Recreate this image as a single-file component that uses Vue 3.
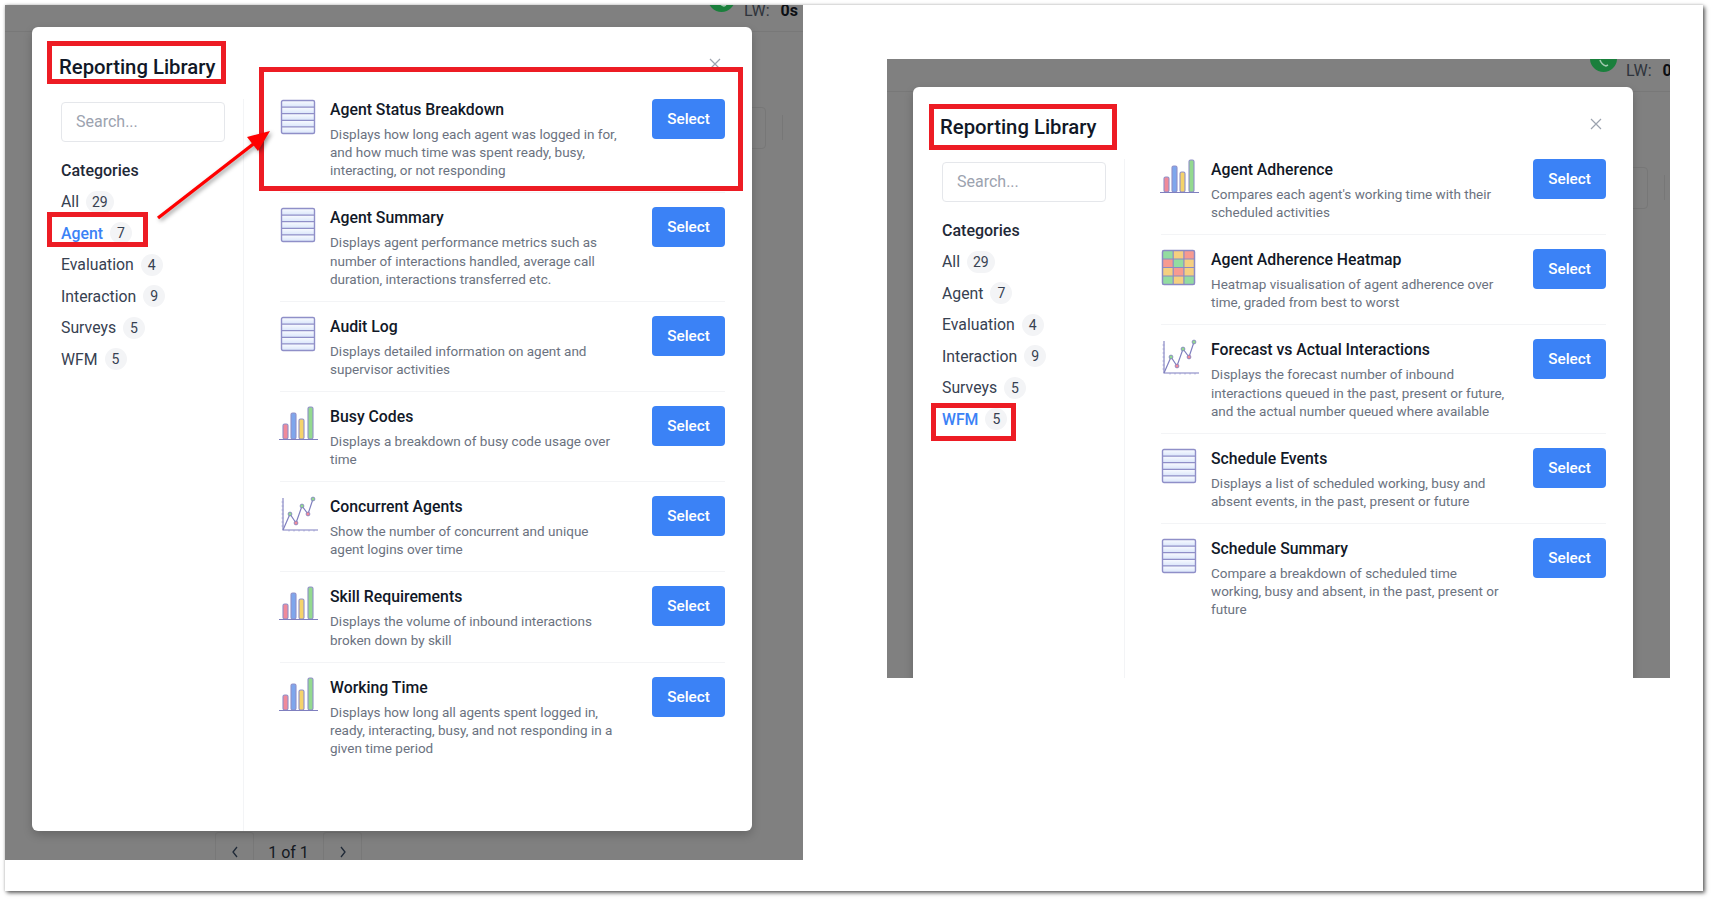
<script setup>
const categories = [
  { name: "All", count: 29 },
  { name: "Agent", count: 7 },
  { name: "Evaluation", count: 4 },
  { name: "Interaction", count: 9 },
  { name: "Surveys", count: 5 },
  { name: "WFM", count: 5 },
];

const agentReports = [
  { icon: "lines", title: "Agent Status Breakdown", text: "Displays how long each agent was logged in for, and how much time was spent ready, busy, interacting, or not responding" },
  { icon: "lines", title: "Agent Summary", text: "Displays agent performance metrics such as number of interactions handled, average call duration, interactions transferred etc." },
  { icon: "lines", title: "Audit Log", text: "Displays detailed information on agent and supervisor activities" },
  { icon: "bars", title: "Busy Codes", text: "Displays a breakdown of busy code usage over time" },
  { icon: "trend", title: "Concurrent Agents", text: "Show the number of concurrent and unique agent logins over time" },
  { icon: "bars", title: "Skill Requirements", text: "Displays the volume of inbound interactions broken down by skill" },
  { icon: "bars", title: "Working Time", text: "Displays how long all agents spent logged in, ready, interacting, busy, and not responding in a given time period" },
];

const wfmReports = [
  { icon: "bars", title: "Agent Adherence", text: "Compares each agent's working time with their scheduled activities" },
  { icon: "heat", title: "Agent Adherence Heatmap", text: "Heatmap visualisation of agent adherence over time, graded from best to worst" },
  { icon: "trend", title: "Forecast vs Actual Interactions", text: "Displays the forecast number of inbound interactions queued in the past, present or future, and the actual number queued where available" },
  { icon: "lines", title: "Schedule Events", text: "Displays a list of scheduled working, busy and absent events, in the past, present or future" },
  { icon: "lines", title: "Schedule Summary", text: "Compare a breakdown of scheduled time working, busy and absent, in the past, present or future" },
];

const panels = [
  { id: "agent", active: "Agent", reports: agentReports, clock: "0s" },
  { id: "wfm", active: "WFM", reports: wfmReports, clock: "0s" },
];

const heatCells = [
  ["#93dca0", "#f5cf80", "#f79a90"],
  ["#f79a90", "#93dca0", "#f5cf80"],
  ["#f5cf80", "#f79a90", "#f5cf80"],
  ["#93dca0", "#f5cf80", "#93dca0"],
];
const barList = [
  { x: 3, y: 18, h: 15, fill: "#f08a9a" },
  { x: 11, y: 7, h: 26, fill: "#7ea6ec" },
  { x: 19, y: 13, h: 20, fill: "#f5d36a" },
  { x: 28, y: 1, h: 32, fill: "#93d98f" },
];
const trendDots = [
  { x: 10, y: 18, fill: "#93d98f" },
  { x: 16, y: 27, fill: "#f08a9a" },
  { x: 22, y: 10, fill: "#93d98f" },
  { x: 28, y: 18, fill: "#f08a9a" },
  { x: 33, y: 3, fill: "#93d98f" },
];
</script>

<template>
  <div class="page">
    <div class="sheet">
      <section v-for="panel in panels" :key="panel.id" class="panel" :class="'panel-' + panel.id">
        <!-- dimmed app behind the dialog -->
        <div class="backdrop">
          <div class="topbar"></div>
          <div class="call-dot">
            <svg width="14" height="14" viewBox="0 0 14 14" class="phone">
              <path d="M3 6c1 3 3 5 6 6l2-1" fill="none" stroke="#9fc9ad" stroke-width="1.6" />
            </svg>
          </div>
          <div class="lw">LW: <b>{{ panel.clock }}</b></div>
          <div class="ghost-box"></div>
          <div class="ghost-line"></div>
          <div class="pager">
            <span class="pager-btn">
              <svg width="8" height="12" viewBox="0 0 8 12"><path d="M6 1 2 6l4 5" fill="none" stroke="#1f2937" stroke-width="1.3" /></svg>
            </span>
            <span class="pager-text">1 of 1</span>
            <span class="pager-btn">
              <svg width="8" height="12" viewBox="0 0 8 12"><path d="M2 1l4 5-4 5" fill="none" stroke="#1f2937" stroke-width="1.3" /></svg>
            </span>
          </div>
        </div>

        <div class="modal">
          <header class="modal-head">
            <h2 class="modal-title">Reporting Library</h2>
            <button class="close" aria-label="Close">
              <svg width="12" height="12" viewBox="0 0 12 12"><path d="M1 1l10 10M11 1 1 11" stroke="#9ca3af" stroke-width="1.2" /></svg>
            </button>
          </header>

          <div class="modal-body">
            <aside class="sidebar">
              <input class="search" type="text" placeholder="Search..." />
              <div class="cat-title">Categories</div>
              <ul class="cats">
                <li v-for="cat in categories" :key="cat.name" class="cat" :class="{ active: cat.name === panel.active }">
                  <span>{{ cat.name }}</span>
                  <span class="badge">{{ cat.count }}</span>
                </li>
              </ul>
            </aside>

            <div class="reports">
              <article v-for="report in panel.reports" :key="report.title" class="report">
                <svg class="icon" width="36" height="36" viewBox="0 0 36 36">
                  <template v-if="report.icon === 'lines'">
                    <defs>
                      <linearGradient :id="'stripe-' + panel.id" x1="0" y1="0" x2="0" y2="1">
                        <stop offset="0" stop-color="#fafcff" />
                        <stop offset="1" stop-color="#d9e5fa" />
                      </linearGradient>
                    </defs>
                    <rect v-for="n in 5" :key="n" x="1.5" :y="1.5 + (n - 1) * 6.6" width="33" height="6.6" :fill="'url(#stripe-' + panel.id + ')'" />
                    <rect x="1.5" y="1.5" width="33" height="33" rx="1.5" fill="none" stroke="#8f8fc8" stroke-width="1.4" />
                    <path d="M1.5 8.1h33M1.5 14.7h33M1.5 21.3h33M1.5 27.9h33" stroke="#8f8fc8" stroke-width="1.3" />
                  </template>

                  <template v-else-if="report.icon === 'bars'">
                    <rect v-for="bar in barList" :key="bar.x" :x="bar.x" :y="bar.y" width="5" :height="bar.h" rx="1.6" :fill="bar.fill" stroke="#8f8fc8" stroke-width="1.1" />
                    <path d="M-1 33.5h39" stroke="#7f7fbf" stroke-width="1.2" />
                  </template>

                  <template v-else-if="report.icon === 'trend'">
                    <path d="M3 2v32h35" fill="none" stroke="#7f7fbf" stroke-width="1.1" />
                    <path d="M1.5 6h2M1.5 10h2M1.5 14h2M1.5 18h2M1.5 22h2M1.5 26h2M1.5 30h2M9 34v1.5M14 34v1.5M19 34v1.5M24 34v1.5M29 34v1.5M34 34v1.5" stroke="#9a9ad0" stroke-width="0.8" />
                    <path d="M3 34 10 18l6 9 6-17 6 8 5-15" fill="none" stroke="#7f7fbf" stroke-width="1.2" />
                    <circle v-for="dot in trendDots" :key="dot.x" :cx="dot.x" :cy="dot.y" r="1.9" :fill="dot.fill" stroke="#7f7fbf" stroke-width="0.8" />
                  </template>

                  <template v-else>
                    <g v-for="(row, r) in heatCells" :key="r">
                      <rect v-for="(color, c) in row" :key="c" :x="1.5 + c * 10.7" :y="1.5 + r * 8.5" width="10.7" height="8.5" :fill="color" />
                    </g>
                    <rect x="1.5" y="1.5" width="32" height="34" rx="1.5" fill="none" stroke="#8a8ac4" stroke-width="1.5" />
                    <path d="M12.2 1.5v34M22.9 1.5v34M1.5 10h32M1.5 18.5h32M1.5 27h32" stroke="#8a8ac4" stroke-width="1.2" />
                  </template>
                </svg>

                <div class="report-text">
                  <h3 class="report-title">{{ report.title }}</h3>
                  <p class="report-desc">{{ report.text }}</p>
                </div>
                <button class="select">Select</button>
              </article>
            </div>
          </div>

          <!-- red annotations on top of the screenshot -->
          <div class="mark mark-title"></div>
          <div class="mark mark-cat"></div>
          <div v-if="panel.id === 'agent'" class="mark mark-report"></div>
          <svg v-if="panel.id === 'agent'" class="arrow" width="120" height="100" viewBox="0 0 120 100">
            <path d="M4 94 100 19.5" stroke="#ff0000" stroke-width="3.4" />
            <path d="M116 7 93 13 104 27Z" fill="#ff0000" />
          </svg>
        </div>
      </section>
    </div>
  </div>
</template>

<style scoped>
.page {
  height: 900px;
  padding: 5px 0 0 5px;
  box-sizing: border-box;
  overflow: hidden;
  background: #fff;
  font-family: Roboto, "Liberation Sans", sans-serif;
}

.sheet {
  display: flex;
  align-items: flex-start;
  gap: 84px;
  width: 1698px;
  height: 886px;
  background: #fff;
  box-shadow: 2px 2px 4px rgba(0, 0, 0, 0.6), 0 0 3px rgba(0, 0, 0, 0.2);
}

.panel {
  position: relative;
  flex: none;
  overflow: hidden;
  background: #808080;
}

.panel-agent {
  width: 798px;
  height: 855px;
  padding: 22px 0 0 27px;
  box-sizing: border-box;
}

.panel-wfm {
  width: 783px;
  height: 619px;
  margin-top: 54px;
  padding: 28px 0 0 26px;
  box-sizing: border-box;
}

.backdrop {
  position: absolute;
  left: 0;
  right: 0;
  top: 0;
  height: 900px;
}

.panel-agent .backdrop {
  top: -6px;
}

.topbar {
  position: absolute;
  left: 0;
  right: 0;
  top: 32px;
  border-top: 1px solid #787878;
}

.call-dot {
  position: absolute;
  left: 703px;
  top: -14px;
  width: 27px;
  height: 27px;
  border-radius: 50%;
  background: #1a7f3c;
}

.phone {
  position: absolute;
  left: 7px;
  top: 9px;
}

.lw {
  position: absolute;
  left: 739px;
  top: 2px;
  font-size: 16px;
  line-height: 20px;
  color: #2f343c;
  white-space: nowrap;
}

.lw b {
  margin-left: 7px;
  color: #0c0f14;
}

.ghost-box {
  position: absolute;
  left: 720px;
  top: 108px;
  width: 39px;
  height: 40px;
  border: 1px solid #777;
  border-radius: 4px;
}

.ghost-line {
  position: absolute;
  left: 777px;
  top: 116px;
  height: 25px;
  border-left: 1px solid #777;
}

.pager {
  position: absolute;
  left: 210px;
  top: 833px;
  display: flex;
  align-items: center;
  height: 40px;
  color: #14181f;
  font-size: 16px;
}

.pager-btn {
  display: flex;
  align-items: center;
  justify-content: center;
  width: 39px;
  height: 40px;
  border: 1px solid #787878;
  border-radius: 3px;
  box-sizing: border-box;
}

.pager-text {
  width: 69px;
  text-align: center;
}

.modal {
  position: relative;
  width: 720px;
  height: 804px;
  background: #fff;
  border-radius: 6px;
  box-shadow: 0 4px 10px rgba(0, 0, 0, 0.2);
}

.modal-head {
  display: flex;
  justify-content: space-between;
  height: 58px;
  padding: 28px 27px 0;
  box-sizing: border-box;
}

.modal-title {
  margin: 0;
  font-size: 20.3px;
  line-height: 24px;
  font-weight: 500;
  color: #111827;
}

.close {
  width: 12px;
  height: 12px;
  margin: 3px 4px 0 0;
  padding: 0;
  border: none;
  background: none;
  line-height: 0;
}

.modal-body {
  display: flex;
  height: 746px;
}

.sidebar {
  flex: none;
  width: 212px;
  margin-top: 14px;
  padding: 3px 0 0 29px;
  box-sizing: border-box;
  border-right: 1px solid #f3f4f6;
}

.search {
  display: block;
  width: 164px;
  height: 40px;
  padding: 0 14px 2px;
  box-sizing: border-box;
  border: 1px solid #e5e7eb;
  border-radius: 4px;
  font: 16px Roboto, sans-serif;
  color: #111827;
  outline: none;
}

.search::placeholder {
  color: #9ca3af;
  opacity: 1;
}

.cat-title {
  margin-top: 17px;
  font-size: 16px;
  line-height: 24px;
  font-weight: 500;
  color: #1f2937;
}

.cats {
  margin: 3px 0 0;
  padding: 0;
  list-style: none;
}

.cat {
  display: flex;
  align-items: center;
  gap: 7px;
  height: 31.5px;
  font-size: 15.8px;
  color: #374151;
}

.cat.active {
  color: #3b82f6;
  font-weight: 500;
}

.badge {
  min-width: 22px;
  height: 22px;
  padding: 0 6px;
  box-sizing: border-box;
  border-radius: 11px;
  background: #f3f4f6;
  font-size: 14px;
  font-weight: 400;
  line-height: 22px;
  text-align: center;
  color: #374151;
}

.reports {
  flex: 1;
  min-width: 0;
  padding: 0 27px 0 36px;
}

.report {
  display: flex;
  align-items: flex-start;
  padding: 13px 0 12.8px;
  border-bottom: 1px solid #f3f4f6;
}

.report:last-child {
  border-bottom: none;
}

.icon {
  flex: none;
  margin: 1px 14px 0 0;
  overflow: visible;
}

.report-text {
  flex: 1;
  min-width: 0;
  padding-right: 27px;
}

.report-title {
  margin: 0 0 3px;
  font-size: 15.8px;
  line-height: 24px;
  font-weight: 500;
  color: #111827;
}

.report-desc {
  margin: 0;
  font-size: 13.5px;
  line-height: 18.2px;
  color: #6b7280;
}

.select {
  flex: none;
  width: 73px;
  height: 40px;
  margin-top: 1px;
  border: none;
  border-radius: 4px;
  background: #3b82f6;
  color: #fff;
  font: 500 15.3px Roboto, sans-serif;
}

.mark {
  position: absolute;
  box-sizing: border-box;
  border: 5px solid #ed1c24;
}

.panel-agent .mark-title {
  left: 15px;
  top: 14px;
  width: 179px;
  height: 43px;
}

.panel-wfm .mark-title {
  left: 16px;
  top: 17px;
  width: 188px;
  height: 46px;
}

.panel-agent .mark-cat {
  left: 15px;
  top: 185px;
  width: 101px;
  height: 35px;
}

.panel-wfm .mark-cat {
  left: 18px;
  top: 316px;
  width: 85px;
  height: 38px;
}

.mark-report {
  left: 227px;
  top: 40px;
  width: 484px;
  height: 124px;
}

.arrow {
  position: absolute;
  left: 122px;
  top: 97px;
  overflow: visible;
  filter: drop-shadow(2px 2px 2px rgba(0, 0, 0, 0.4));
}
</style>
